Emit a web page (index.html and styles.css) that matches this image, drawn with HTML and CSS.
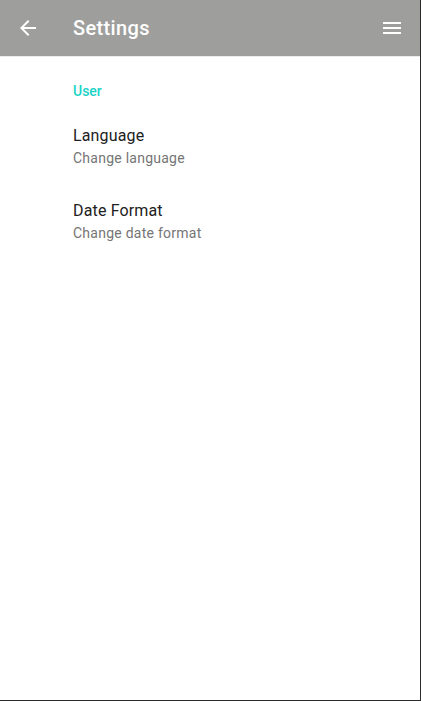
FILE: index.html
```html
<!DOCTYPE html>
<html>
<head>
<meta charset="utf-8">
<link rel="stylesheet" href="styles.css">
</head>
<body>
<div class="screen">
  <header class="toolbar">
    <svg class="icon back" viewBox="0 0 24 24" width="24" height="24"><path d="M20 11H7.83l5.59-5.59L12 4l-8 8 8 8 1.41-1.41L7.83 13H20v-2z" fill="#fff"/></svg>
    <div class="title">Settings</div>
    <svg class="icon menu" viewBox="0 0 24 24" width="24" height="24"><path d="M3 18h18v-2H3v2zm0-5h18v-2H3v2zm0-7v2h18V6H3z" fill="#fff"/></svg>
  </header>
  <main class="content">
    <div class="category">User</div>
    <div class="pref">
      <div class="pref-title">Language</div>
      <div class="pref-summary">Change language</div>
    </div>
    <div class="pref">
      <div class="pref-title">Date Format</div>
      <div class="pref-summary">Change date format</div>
    </div>
  </main>
</div>
</body>
</html>
```
FILE: styles.css
```css
* { box-sizing: border-box; }
html, body { margin: 0; padding: 0; }
body { font-family: Roboto, "Noto Sans", sans-serif; background: #fff; }
.screen {
  width: 421px;
  height: 701px;
  border-right: 1px solid #2b2b2b;
  border-bottom: 1px solid #2b2b2b;
  display: flex;
  flex-direction: column;
  overflow: hidden;
}
.toolbar {
  height: 56px;
  flex: none;
  background: #9e9e9c;
  display: flex;
  align-items: center;
  padding: 0 16px;
  border-bottom: 1px solid #ececec;
  box-sizing: content-box;
}
.icon { flex: none; display: block; }
.title {
  flex: 1;
  margin-left: 33px;
  color: #fff;
  font-size: 20px;
  font-weight: 500;
  line-height: 24px;
  letter-spacing: 0.35px;
}
.content { padding: 0 0 0 73px; }
.category {
  color: #18d3c6;
  font-size: 14px;
  font-weight: 500;
  line-height: 20px;
  margin-top: 24px;
}
.pref {
  padding-top: 25px;
  padding-bottom: 21px;
}
.pref + .pref { padding-top: 12px; }
.pref-title {
  color: #212121;
  font-size: 16px;
  line-height: 20px;
  letter-spacing: 0.15px;
}
.pref-summary {
  color: #757575;
  font-size: 14px;
  line-height: 20px;
  margin-top: 2px;
  letter-spacing: 0.25px;
}
```
